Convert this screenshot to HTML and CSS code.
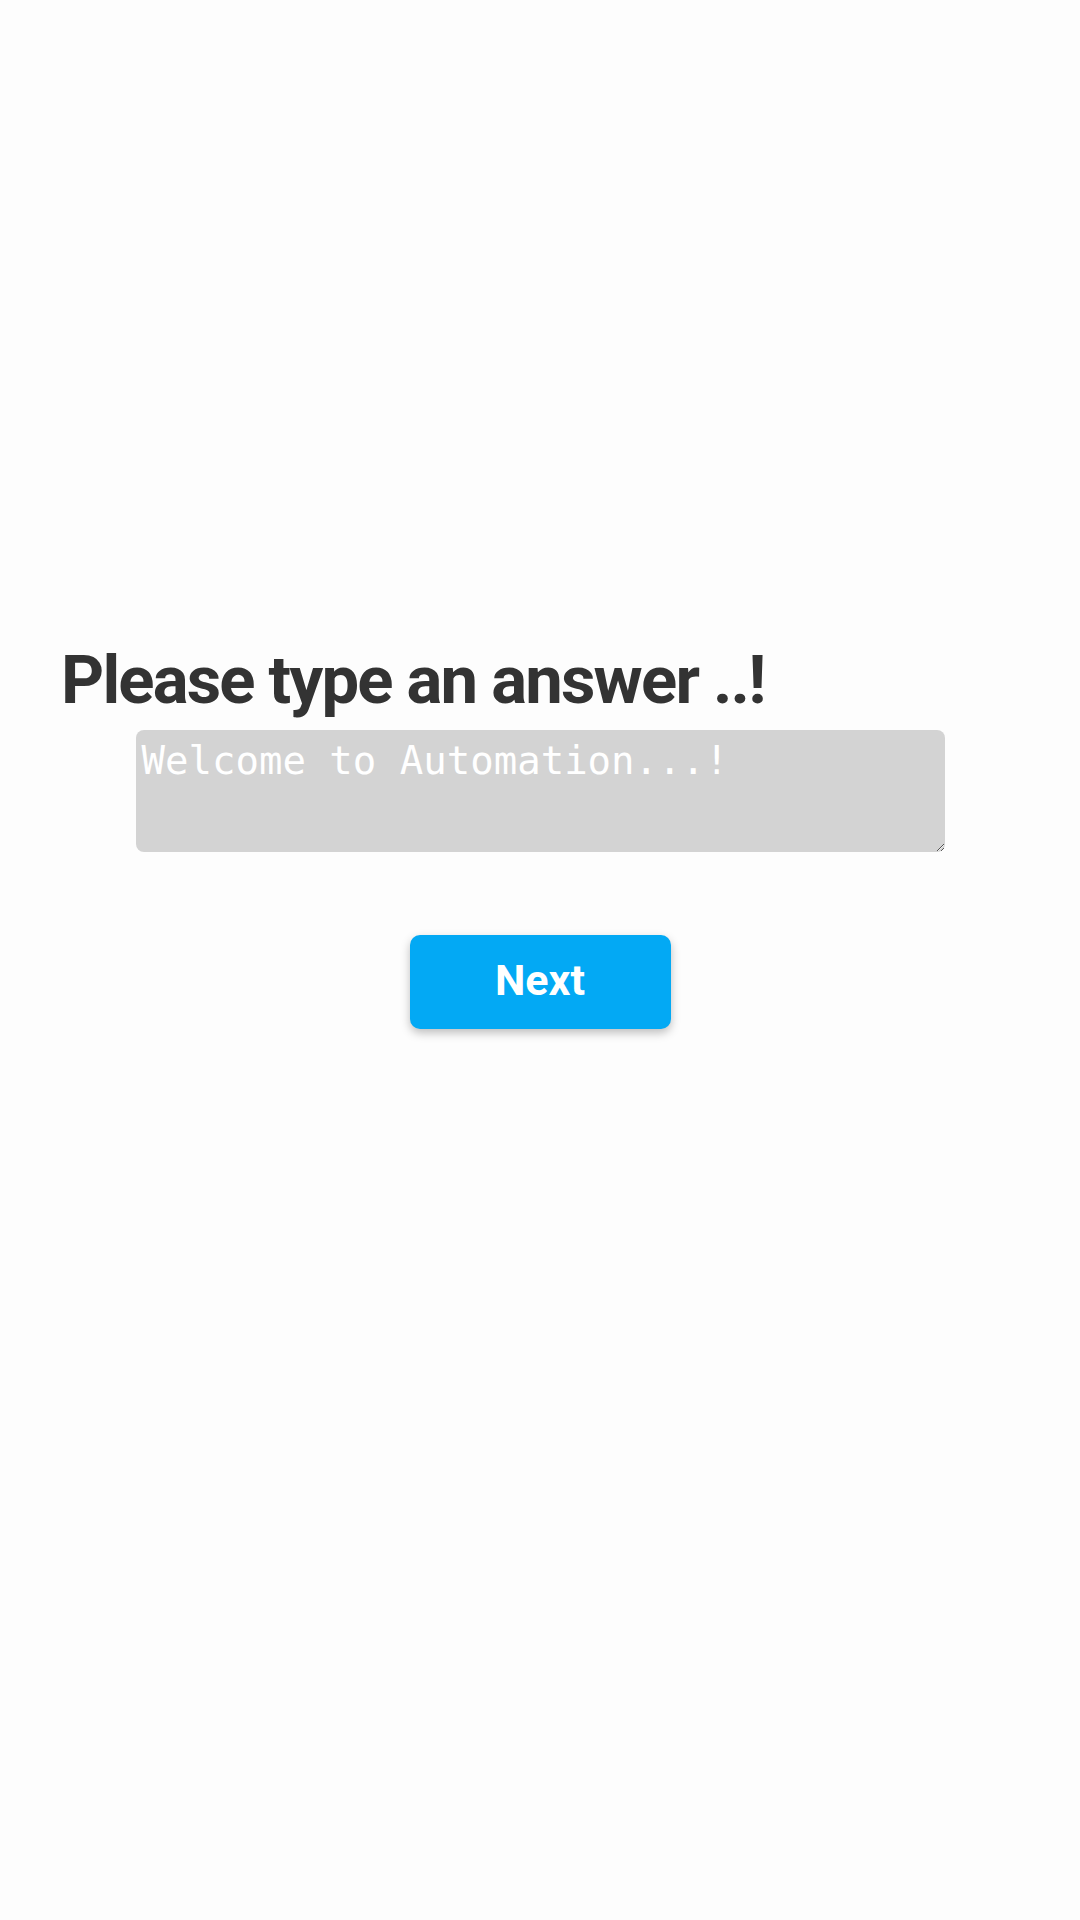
FILE: index.html
```html
<!DOCTYPE html>
<html>
<head>
<meta charset="utf-8">
<link rel="stylesheet" href="styles.css">
</head>
<body>
<main class="page">
  <h1 class="title">Please type an answer ..!</h1>
  <div class="field">
    <textarea class="answer" placeholder="Welcome to Automation...!"></textarea>
  </div>
  <div class="actions">
    <button class="next">Next</button>
  </div>
</main>
</body>
</html>
```

FILE: styles.css
```css
html, body {
  margin: 0;
  padding: 0;
  background: #fdfdfd;
}
.page {
  width: 1080px;
  height: 1920px;
  display: flex;
  flex-direction: column;
  padding-top: 640px;
  box-sizing: border-box;
}
.title {
  margin: 0 0 0 61px;
  font-family: Roboto, "Liberation Sans", sans-serif;
  font-weight: 700;
  font-size: 67px;
  line-height: 80px;
  color: #333333;
  letter-spacing: -1.8px;
}
.field {
  display: flex;
  justify-content: center;
  margin-top: 10px;
}
.answer {
  width: 809px;
  height: 122px;
  box-sizing: border-box;
  background: #d3d3d3;
  border: none;
  border-radius: 8px;
  padding: 9px 6px 4px 6px;
  font-family: "DejaVu Sans Mono", monospace;
  font-size: 39px;
  line-height: 1.15;
  color: #333;
  outline: none;
}
.answer::placeholder {
  color: #ffffff;
  opacity: 1;
}
.actions {
  display: flex;
  justify-content: center;
  margin-top: 83px;
}
.next {
  width: 261px;
  height: 94px;
  border: none;
  border-radius: 10px;
  background: #03a9f4;
  color: #ffffff;
  font-family: Roboto, "Liberation Sans", sans-serif;
  font-weight: 700;
  font-size: 43px;
  padding: 0 0 4px 0;
  box-shadow: 0 4px 10px rgba(0,0,0,0.25);
}
```
